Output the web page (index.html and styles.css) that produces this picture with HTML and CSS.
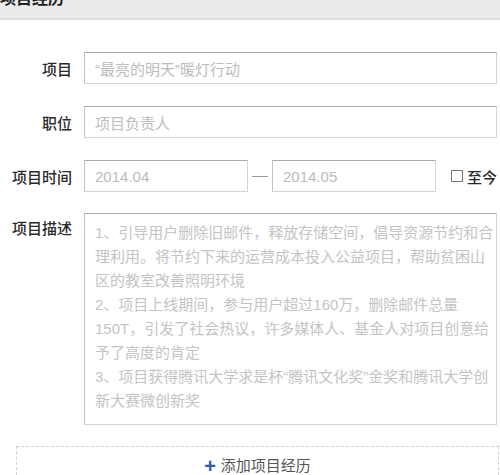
FILE: index.html
```html
<!DOCTYPE html>
<html lang="zh">
<head>
<meta charset="utf-8">
<link rel="stylesheet" href="styles.css">
</head>
<body>
<div class="header"><h2 class="title">项目经历</h2></div>
<div class="form">
  <div class="row">
    <label class="label">项目</label>
    <div class="field full"><span class="ph">“最亮的明天”暖灯行动</span></div>
  </div>
  <div class="row">
    <label class="label">职位</label>
    <div class="field full"><span class="ph">项目负责人</span></div>
  </div>
  <div class="row">
    <label class="label">项目时间</label>
    <div class="field half"><span class="ph">2014.04</span></div>
    <span class="dash"></span>
    <div class="field half"><span class="ph">2014.05</span></div>
    <span class="check"><span class="box"></span>至今</span>
  </div>
  <div class="row top">
    <label class="label">项目描述</label>
    <div class="field area">
      <span class="line">1、引导用户删除旧邮件，释放存储空间，倡导资源节约和合</span>
      <span class="line">理利用。将节约下来的运营成本投入公益项目，帮助贫困山</span>
      <span class="line">区的教室改善照明环境</span>
      <span class="line">2、项目上线期间，参与用户超过160万，删除邮件总量</span>
      <span class="line">150T，引发了社会热议，许多媒体人、基金人对项目创意给</span>
      <span class="line">予了高度的肯定</span>
      <span class="line">3、项目获得腾讯大学求是杯“腾讯文化奖”金奖和腾讯大学创</span>
      <span class="line">新大赛微创新奖</span>
    </div>
  </div>
</div>
<div class="add"><span class="plus">+</span>添加项目经历</div>
</body>
</html>
```
FILE: styles.css
```css
html, body {
  margin: 0;
  padding: 0;
  background: #fff;
  font-family: "Liberation Sans", "Noto Sans CJK SC", sans-serif;
  color: #333;
  overflow: hidden;
}
.header {
  height: 18px;
  background: #ebebeb;
  border-bottom: 2px solid #dedede;
  overflow: hidden;
}
.title {
  margin: -11px 0 0 0;
  font-size: 16px;
  line-height: 20px;
  font-weight: bold;
  color: #222;
}
.form {
  padding: 32px 0 0 0;
  display: flex;
  flex-direction: column;
  gap: 22px;
}
.row {
  display: flex;
  align-items: center;
  height: 32px;
}
.row.top {
  align-items: flex-start;
  height: auto;
  margin-top: -1px;
}
.label {
  width: 72px;
  margin-right: 12px;
  text-align: right;
  font-size: 15px;
  font-weight: 500;
  color: #2a2a2a;
  flex: none;
}
.row.top .label {
  line-height: 24px;
  margin-top: 4px;
}
.field {
  box-sizing: border-box;
  height: 32px;
  border: 1px solid #d4d4d4;
  border-top-color: #a9a9a9;
  border-left-color: #c4c4c4;
  padding: 0 0 0 10px;
  display: flex;
  align-items: center;
  flex: none;
}
.field.full { width: 413px; }
.field.half { width: 164px; }
.ph {
  font-size: 15px;
  color: #bcbcbc;
  white-space: nowrap;
}
.dash {
  width: 16px;
  height: 1px;
  background: #9a9a9a;
  margin: 0 4px;
  flex: none;
}
.check {
  display: flex;
  align-items: center;
  margin-left: 15px;
  font-size: 15px;
  font-weight: 500;
  color: #2a2a2a;
  white-space: nowrap;
}
.box {
  box-sizing: border-box;
  width: 12px;
  height: 12px;
  border: 1px solid #777;
  margin-right: 4px;
}
.field.area {
  width: 413px;
  height: 212px;
  flex-direction: column;
  align-items: flex-start;
  padding: 7px 0 0 10px;
  overflow: hidden;
}
.line {
  display: block;
  font-size: 15px;
  line-height: 24px;
  color: #c4c4c4;
  white-space: nowrap;
}
.add {
  box-sizing: border-box;
  margin: 21px 0 0 16px;
  width: 483px;
  height: 40px;
  border: 1px dashed #d2d2d2;
  text-align: center;
  padding-top: 7px;
  font-size: 15px;
  line-height: 24px;
  color: #555;
}
.plus {
  display: inline-block;
  color: #2a5ea6;
  font-weight: bold;
  font-size: 20px;
  margin-right: 5px;
  vertical-align: top;
}
```
